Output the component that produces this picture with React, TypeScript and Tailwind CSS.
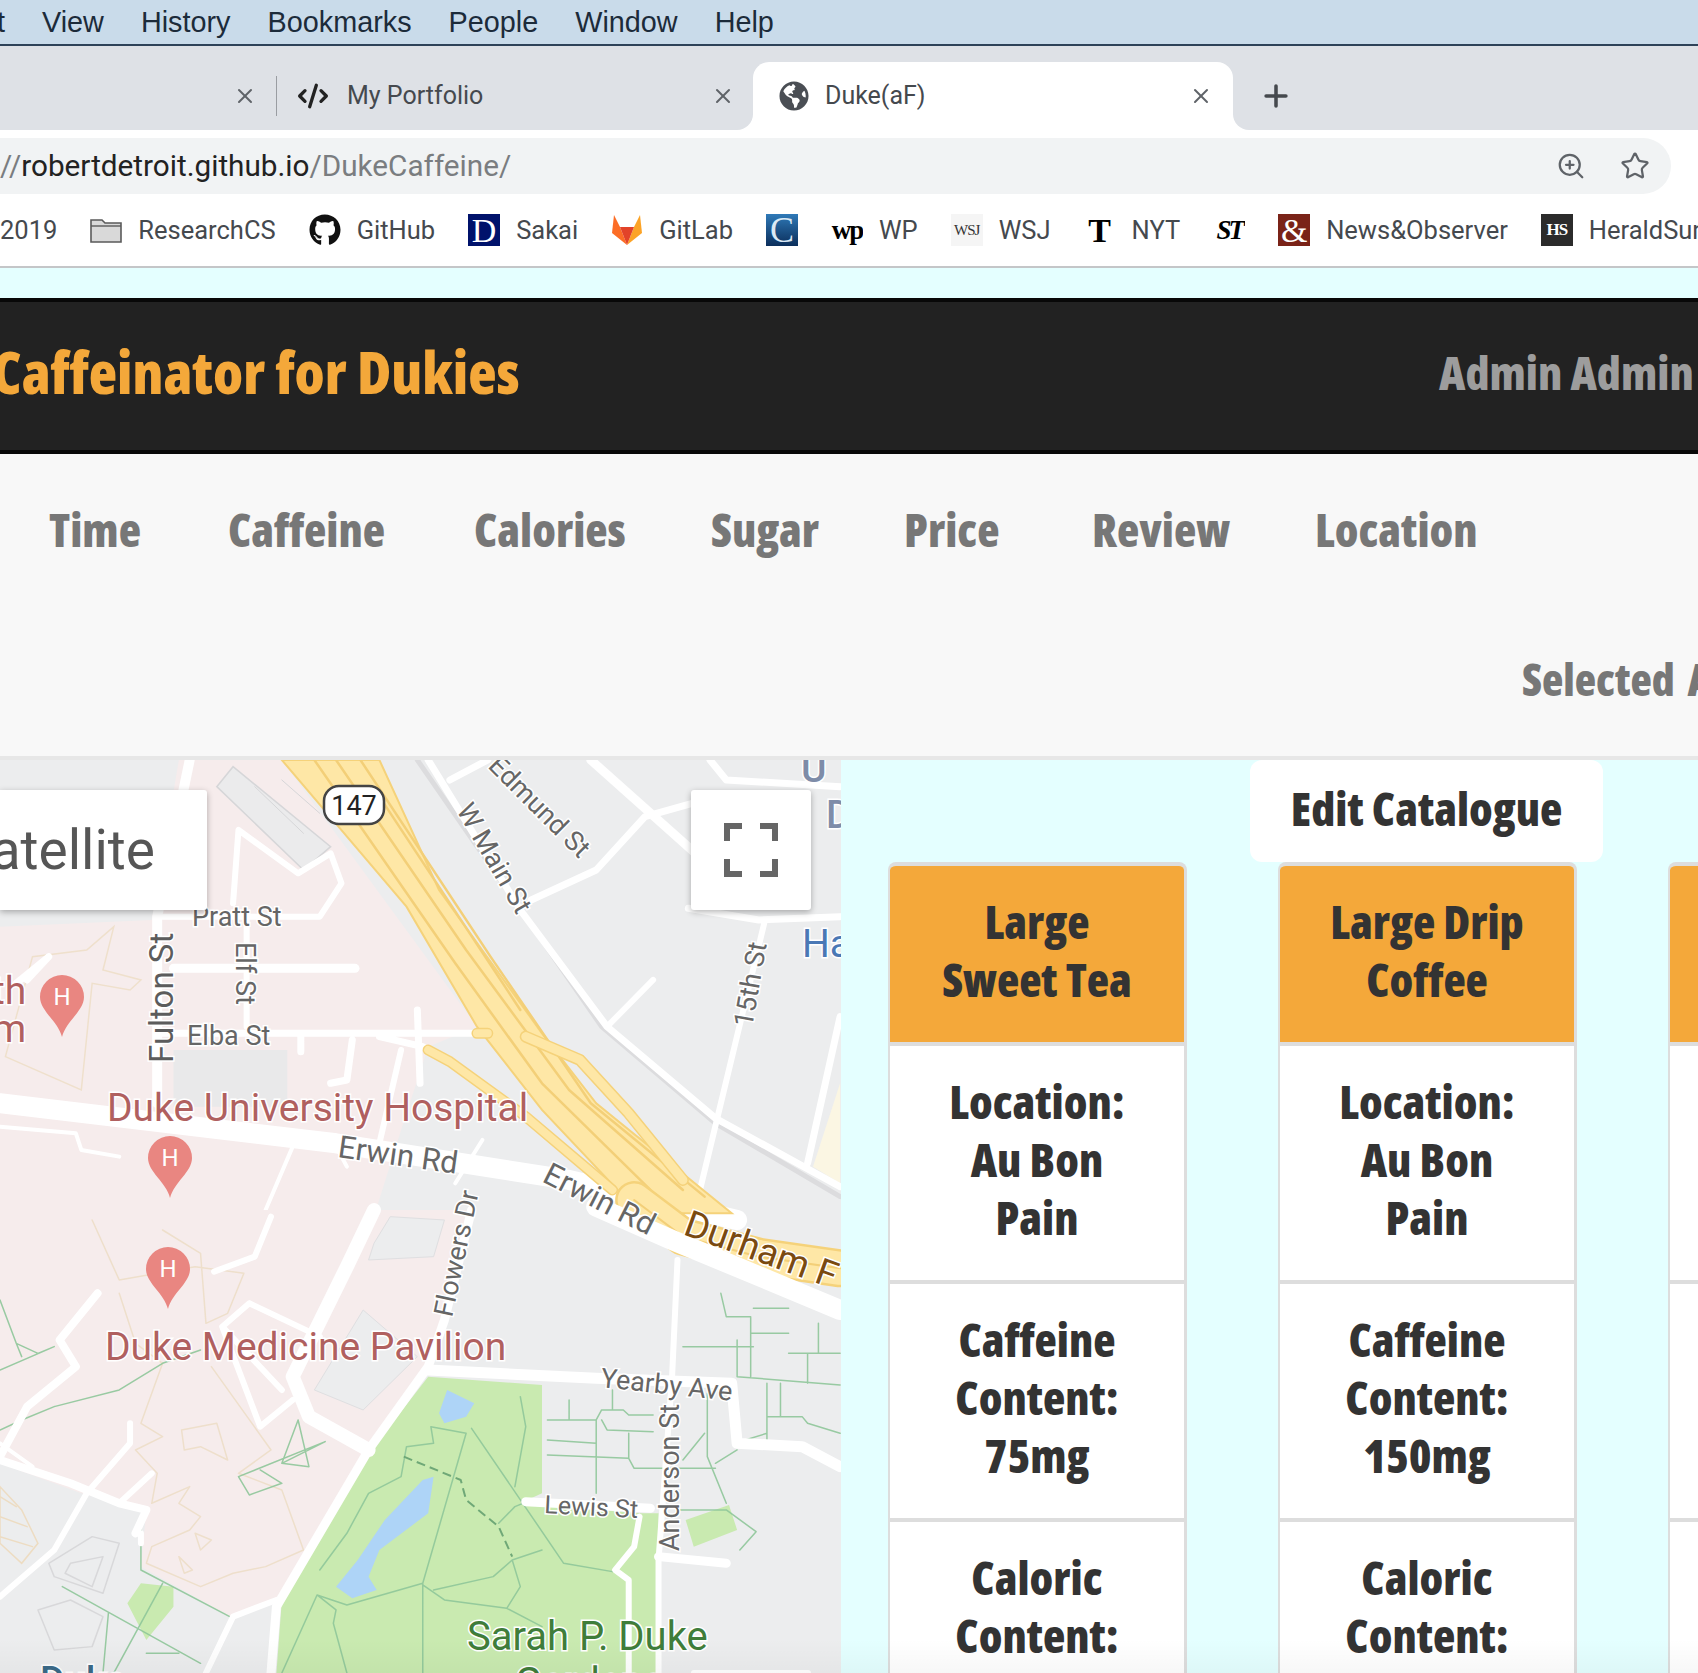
import { CodeXml, Plus, Star, X, ZoomIn } from 'lucide-react'
import { FaGithub, FaGlobeAmericas } from 'react-icons/fa'

const display = "font-['Open_Sans',sans-serif] font-extrabold font-stretch-condensed"
const chrome = "font-['Roboto',sans-serif]"

const navItems = [
  ['Time', 'w-[179px]'],
  ['Caffeine', 'w-[246px]'],
  ['Calories', 'w-[237px]'],
  ['Sugar', 'w-[193px]'],
  ['Price', 'w-[188px]'],
  ['Review', 'w-[223px]'],
  ['Location', 'w-[200px]'],
]

const drinks = [
  { name: ['Large', 'Sweet Tea'], caffeine: '75mg' },
  { name: ['Large Drip', 'Coffee'], caffeine: '150mg' },
  { name: ['Small', 'Iced Tea'], caffeine: '50mg' },
]

function Favicon({ className, children }: { className: string; children: React.ReactNode }) {
  return (
    <div className={`w-8 h-8 shrink-0 flex items-center justify-center overflow-hidden font-['Liberation_Serif',serif] ${className}`}>
      {children}
    </div>
  )
}

function Bookmark({ icon, label }: { icon: React.ReactNode; label?: string }) {
  return (
    <div className="flex items-center gap-4 shrink-0">
      {icon}
      {label && <span>{label}</span>}
    </div>
  )
}

function BrowserChrome() {
  return (
    <div className={chrome}>
      <div className="h-[46px] pt-[2px] bg-[#c9dbea] border-b-2 border-[#2d4258] flex items-center gap-[37px] -ml-[30px] text-[28.8px] text-[#1c2b3a] font-['Liberation_Sans',sans-serif] whitespace-nowrap">
        <span className="w-[35px] flex justify-end">Edit</span>
        <span>View</span>
        <span>History</span>
        <span>Bookmarks</span>
        <span>People</span>
        <span>Window</span>
        <span>Help</span>
      </div>
      <div className="h-[84px] flex bg-white text-[25px] text-[#45494e]">
        <div className="w-[753px] bg-[#dee1e6] rounded-br-[16px] flex items-center pt-4">
          <X className="ml-[233px] w-6 h-6 text-[#5f6368]" />
          <div className="w-px h-[40px] bg-[#9a9da2] ml-[19px]" />
          <CodeXml className="ml-[20px] w-[32px] h-[32px] text-[#222]" strokeWidth={2.5} />
          <span className="ml-[18px] w-[364px]">My Portfolio</span>
          <X className="w-6 h-6 text-[#5f6368]" />
        </div>
        <div className="w-[480px] bg-[#dee1e6] pt-4">
          <div className="h-full bg-white rounded-t-[16px] flex items-center">
            <FaGlobeAmericas className="ml-[26px] w-[30px] h-[30px] text-[#4a4e54]" />
            <span className="ml-[16px] w-[364px]">Duke(aF)</span>
            <X className="w-6 h-6 text-[#5f6368]" />
          </div>
        </div>
        <div className="flex-1 bg-[#dee1e6] rounded-bl-[16px] flex items-center pt-4">
          <Plus className="ml-[26px] w-[34px] h-[34px] text-[#45494e]" strokeWidth={2.5} />
        </div>
      </div>
      <div className="h-[64px] bg-white pt-2">
        <div className="w-[1671px] h-[56px] bg-[#f1f3f4] rounded-r-[28px] flex items-center text-[29.7px] whitespace-nowrap">
          <span className="text-[#7a7d80]">//</span>
          <span className="text-[#222]">robertdetroit.github.io</span>
          <span className="text-[#7a7d80]">/DukeCaffeine/</span>
          <ZoomIn className="ml-auto w-[30px] h-[30px] text-[#5f6368]" strokeWidth={1.8} />
          <Star className="ml-[34px] mr-[21px] w-[30px] h-[30px] text-[#5f6368]" strokeWidth={1.8} />
        </div>
      </div>
      <div className="h-[74px] bg-white border-b-2 border-[#c4c6c8] flex items-center gap-[33px] text-[25.5px] text-[#45494e] whitespace-nowrap">
        <span>2019</span>
        <Bookmark
          label="ResearchCS"
          icon={
            <svg viewBox="0 0 32 26" className="w-8 h-[26px]">
              <path d="M1 3h11l3 3h16v19H1z" fill="#d9d9d9" stroke="#5a5a5a" strokeWidth="1.6" />
              <path d="M1 9h30" stroke="#5a5a5a" strokeWidth="1.4" />
            </svg>
          }
        />
        <Bookmark label="GitHub" icon={<FaGithub className="w-8 h-8 text-[#111]" />} />
        <Bookmark
          label="Sakai"
          icon={<Favicon className="bg-[#00126b] text-white text-[34px]">D</Favicon>}
        />
        <Bookmark
          label="GitLab"
          icon={
            <svg viewBox="0 0 32 32" className="w-8 h-8">
              <path d="M16 31 1 19 3 1l6 12z" fill="#fc6d26" />
              <path d="M16 31 31 19 29 1l-6 12z" fill="#fca326" />
              <path d="M16 31 9 13h14z" fill="#e24329" />
            </svg>
          }
        />
        <Bookmark
          icon={<Favicon className="bg-gradient-to-b from-[#2f7ab8] to-[#0c2f5c] text-[#dbe9f5] text-[36px]">C</Favicon>}
        />
        <Bookmark
          label="WP"
          icon={<Favicon className="text-black text-[27px] font-bold tracking-[-2px]">wp</Favicon>}
        />
        <Bookmark
          label="WSJ"
          icon={<Favicon className="bg-[#f5f5f5] text-[#333] text-[15px] tracking-[-1px]">WSJ</Favicon>}
        />
        <Bookmark
          label="NYT"
          icon={<Favicon className="text-black text-[34px] font-bold">T</Favicon>}
        />
        <Bookmark
          icon={<Favicon className="text-black text-[27px] font-bold italic tracking-[-3px]">ST</Favicon>}
        />
        <Bookmark
          label="News&Observer"
          icon={<Favicon className="bg-[#7a2318] text-white text-[34px]">&amp;</Favicon>}
        />
        <Bookmark
          label="HeraldSun"
          icon={<Favicon className="bg-[#2b2b2b] text-white text-[17px] font-bold tracking-[-1px]">HS</Favicon>}
        />
      </div>
    </div>
  )
}

function MapPin({ x, y }: { x: number; y: number }) {
  return (
    <g transform={`translate(${x} ${y})`}>
      <path d="M0 60C-4 44-22 34-22 20a22 22 0 0 1 44 0C22 34 4 44 0 60z" fill="#e98681" />
      <text x="0" y="28" textAnchor="middle" fontSize="24" fill="#fff">H</text>
    </g>
  )
}

function Road({ d, w = 8, c = '#fff', dash }: { d: string; w?: number; c?: string; dash?: string }) {
  return <path d={d} fill="none" stroke={c} strokeWidth={w} strokeDasharray={dash} strokeLinejoin="round" strokeLinecap={dash ? 'butt' : 'round'} vectorEffect="non-scaling-stroke" />
}

function Label({ x, y, size = 27, color = '#666', rotate = 0, weight = 400, children }: {
  x: number
  y: number
  size?: number
  color?: string
  rotate?: number
  weight?: number
  children: string
}) {
  return (
    <text
      x={x}
      y={y}
      fontSize={size}
      fill={color}
      fontWeight={weight}
      stroke="#fff"
      strokeWidth="3"
      className="[paint-order:stroke]"
      transform={rotate ? `rotate(${rotate} ${x} ${y})` : undefined}
    >
      {children}
    </text>
  )
}

function MapDrawing() {
  return (
    <svg viewBox="0 0 841 913" className="w-[841px] h-[913px] block font-['Roboto',sans-serif]">
      <rect width="841" height="913" fill="#ecedee" />
      {/* upper half, traced from the top crop */}
      <g transform="translate(0 -10) scale(.542 .3333)">
        <path d="M0 530 280 510 330 30H520L880 830 790 890 740 1140 690 1400H0z" fill="#f6ecec" />
        <path d="M1500 1250 1550 1000V1300z" fill="#fbf6e3" />
        <path d="M430 50 610 290 560 360 400 110z" fill="#ebebec" stroke="#d6d6d8" strokeWidth="1.5" vectorEffect="non-scaling-stroke" />
        <Road d="M470 110 560 250M520 90 590 190" w={1} c="#d6d6d8" />
        <path d="M210 530 190 660 260 690 240 720 170 700 150 1020 10 920 60 620 160 600z" fill="none" stroke="#efe0cc" strokeWidth="1.5" vectorEffect="non-scaling-stroke" />
        <Road d="M30 700 90 620 50 690" w={7} />
        <path d="M320 900H530V1070H320z" fill="#e9e9ea" />
        <Road d="M350 30 290 500V1060" w={10} />
        <Road d="M300 500H590L630 400 610 310 550 370 440 240 430 460" w={6} />
        <Road d="M320 655H655" w={9} />
        <Road d="M455 500V830" w={6} />
        <Road d="M290 850H880M700 860 780 890M770 780 775 1000M650 870 640 990 610 1000M555 860V905" w={7} />
        <Road d="M0 1060 620 1180 1050 1290 1360 1410" w={20} />
        <Road d="M700 1180 740 900" w={6} />
        <Road d="M770 30 1110 830 1320 1120 1550 1340" w={5} c="#dcdcde" />
        <Road d="M790 30 960 480 1120 830 1320 1105 1550 1310" w={7} />
        <Road d="M830 90 900 30M980 450 1100 360 1190 200 1300 150" w={7} />
        <Road d="M1090 30 1290 320" w={9} />
        <Road d="M1410 520 1290 1330" w={6} />
        <Road d="M1120 830 1205 690" w={6} />
        <Road d="M1310 30 1340 90 1550 110M1270 475 1400 510 1550 500M1550 800 1490 1240" w={7} />
        <path d="M520 30H700L810 420 1000 850 1100 1060 1350 1390H1180L1000 1080 880 830 750 470z" fill="#fee7a6" stroke="#f5d27a" strokeWidth="2" vectorEffect="non-scaling-stroke" />
        <Road d="M580 30 840 640 1000 1000 1200 1320M620 30 860 600 1050 1020 1260 1320M665 30 905 620 1090 1060 1300 1340M700 140 960 780" w={2.5} c="#f3cf78" />
        <Road d="M970 860 1070 930 1160 1090 1260 1290" w={12} c="#f5d27a" />
        <Road d="M970 860 1070 930 1160 1090 1260 1290" w={9} c="#fee7a6" />
        <Road d="M790 900 830 935 970 1100 1130 1320M880 850H900" w={11} c="#f5d27a" />
        <Road d="M790 900 830 935 970 1100 1130 1320M880 850H900" w={8} c="#fee7a6" />
        <Road d="M0 1130 140 1150 150 1200 220 1220M490 1380 540 1190M620 1190 640 1250M840 1300 890 1170" w={4} />
      </g>
      {/* lower half, traced from the bottom crop */}
      <g transform="translate(0 450) scale(.542 .3333)">
        <path d="M0 0H870L790 470 680 720 520 1170 430 1225 260 1070 270 900 150 850 0 760z" fill="#f6ecec" />
        <path d="M680 150 690 100 720 20 820 30 800 140zM580 540 670 300 770 440 670 600z" fill="#ecedee" stroke="#dfdfe1" strokeWidth="1" vectorEffect="non-scaling-stroke" />
        <g fill="none" stroke="#eedfcb" strokeWidth="1.5">
          <Road d="M170 30 220 210 360 170 450 190 420 310 380 340 370 130 300 60" w={1.5} c="#eedfcb" />
          <Road d="M220 250 250 400 300 460 260 640 300 680 250 720 290 790 280 880 350 830 330 880 370 920 350 960 280 1010 270 1060 370 1130 430 1090 490 1070 560 1020 520 840 440 790 500 720 390 470" w={1.5} c="#eedfcb" />
          <Road d="M335 660 400 640 420 750 370 710 340 720zM360 970 390 990 370 1020zM330 1040 355 1080 340 1090z" w={1.5} c="#eedfcb" />
        </g>
        <path d="M0 830 40 900 70 1000 40 1060 0 1000z" fill="none" stroke="#eddcc2" strokeWidth="1.5" vectorEffect="non-scaling-stroke" />
        <Road d="M0 860 30 890M0 920 50 950M0 980 60 1010" w={1.5} c="#eddcc2" />
        <Road d="M90 1060 170 980 220 1000 190 1150 100 1100zM130 1060 190 1040 170 1130 120 1090zM70 1200 130 1170 190 1220 170 1310 100 1320z" w={1.5} c="#d8d8da" />
        <path d="M790 500 1000 525V850L960 880 1180 910H1215V1389H510L520 1170 680 730z" fill="#c9eab0" />
        <path d="M1265 930 1345 885 1360 960 1280 1010zM260 1120 320 1130 320 1190 270 1290 235 1180z" fill="#c9eab0" />
        <path d="M825 540 875 580 860 620 820 640 810 610zM800 800 790 910 700 1020 680 1100 695 1140 650 1165 620 1130 660 1050 710 930 780 810z" fill="#aed4f7" />
        <g opacity=".9">
          <Road d="M0 270 30 400 70 430 100 410M30 400 40 440M0 480 100 410M100 590 220 540 300 460 370 420M0 660 40 630 100 590" w={1.5} c="#8fc79a" />
          <Road d="M550 630 520 760 600 695 440 800 460 855 520 820 480 780M550 630 570 770 520 760" w={1.5} c="#8fc79a" />
          <Road d="M260 960V1080L430 1225M115 1130 370 1360M200 1210 190 1389M300 1120 210 1389M270 1330H330" w={1.5} c="#8fc79a" />
          <Road d="M590 1080 640 970 680 850 740 800 750 710 800 700 795 650 860 670 780 1120 640 1185 585 1155 520 1389M870 655 1040 1060 1130 1085M960 560 970 650 950 830M780 1120V1389M780 1125 820 1170 935 1195 960 1130 945 1050 1000 1020M800 1140 910 1100 945 1050M585 1155 620 1200 615 1240 640 1389M935 1195 1000 1250M920 940 950 890 980 870" w={1.5} c="#8fc79a" />
          <Road d="M1010 630H1100L1110 600H1150L1160 615 1205 615M1100 630 1100 850M1050 570 1050 630M1130 540V600M1110 630 1120 660 1205 665M1010 690 1100 700M1010 735 1160 745 1170 775H1320M1160 670V745M1250 900H1340L1395 965 1365 1020M1300 670 1260 750M1305 550 1305 740 1340 880" w={1.5} c="#8fc79a" />
          <Road d="M1330 250 1340 320H1385V500M1390 295H1455M1385 370H1455M1260 410H1390M1360 390V500L1550 525M1510 340V430M1455 430H1550M1490 430V520M1440 520V620M1415 520V700M1415 620H1480L1490 640 1550 670M1375 690 1415 670M1360 720 1320 760" w={1.5} c="#8fc79a" />
        </g>
        <Road d="M745 740 850 810 860 870 920 950 945 1040" w={2} c="#6fa877" dash="9 5" />
        <Road d="M690 0 640 170 540 500 570 620 680 720" w={14} />
        <Road d="M1170 -30 1260 80 1400 140 1550 175" w={38} c="#f5d27a" />
        <Road d="M1170 -30 1260 80 1400 140 1550 175" w={33} c="#fee7a6" />
        <Road d="M1170 -30 1260 80 1400 140 1550 175" w={2} c="#f3cf78" />
        <Road d="M1100 -10 1240 90 1550 300" w={20} />
        <Road d="M870 0 820 330 790 470 680 720 510 1190 500 1389" w={9} />
        <Road d="M790 480 1100 505 1350 520 1360 700 1480 710 1550 770" w={11} />
        <Road d="M1250 150 1240 500 1215 1050V1389" w={6} />
        <Road d="M970 875 1200 895M1215 1040 1340 1060" w={9} />
        <Road d="M1180 920 1170 1010 1135 1080 1160 1110V1389" w={6} />
        <Road d="M180 250 110 390 140 470 50 590 0 740M0 750 130 820 220 880 270 900 250 970" w={8} />
        <Road d="M160 850 100 1020 0 1160M240 640 240 700 160 850M280 790 220 880M510 1170 430 1220 380 1389M260 970V1000" w={6} />
        <Road d="M460 280 410 350 480 650 540 570M410 350 520 540M460 280 590 380M395 185 470 140 500 20" w={6} />
        <Road d="M0 700 60 770" w={4} />
      </g>

      <g transform="translate(354 45)">
        <rect x="-30" y="-19" width="60" height="38" rx="15" fill="#fff" stroke="#444" strokeWidth="2.5" />
        <text textAnchor="middle" y="10" fontSize="27" fill="#222">147</text>
      </g>

      <MapPin x={62} y={217} />
      <MapPin x={170} y={378} />
      <MapPin x={168} y={489} />

      <Label x={107} y={361} size={39} color="#b0605f">Duke University Hospital</Label>
      <Label x={105} y={600} size={39} color="#b0605f">Duke Medicine Pavilion</Label>
      <Label x={-8} y={244} size={39} color="#b0605f">th</Label>
      <Label x={-8} y={282} size={39} color="#b0605f">m</Label>
      <Label x={337} y={397} size={31} rotate={8}>Erwin Rd</Label>
      <Label x={541} y={421} size={31} rotate={27}>Erwin Rd</Label>
      <Label x={682} y={474} size={37} rotate={20} color="#7a4a10">Durham F</Label>
      <Label x={192} y={166} size={27}>Pratt St</Label>
      <Label x={173} y={303} size={33} rotate={-90} color="#5c5c5c">Fulton St</Label>
      <Label x={236} y={182} size={27} rotate={90}>Elf St</Label>
      <Label x={187} y={285} size={27}>Elba St</Label>
      <Label x={456} y={50} size={27} rotate={60}>W Main St</Label>
      <Label x={487} y={7} size={27} rotate={45}>Edmund St</Label>
      <Label x={752} y={268} size={27} rotate={-80}>15th St</Label>
      <Label x={802} y={197} size={39} color="#4a78b5">Ha</Label>
      <Label x={801} y={22} size={39} color="#7e8ca8" weight={500}>U</Label>
      <Label x={826} y={68} size={39} color="#7e8ca8" weight={500}>D</Label>
      <Label x={452} y={558} size={27} rotate={-78}>Flowers Dr</Label>
      <Label x={600} y={627} size={27} rotate={6}>Yearby Ave</Label>
      <Label x={679} y={791} size={27} rotate={-90}>Anderson St</Label>
      <Label x={544} y={753} size={25} rotate={3}>Lewis St</Label>
      <Label x={467} y={890} size={40} color="#3f7d3a">Sarah P. Duke</Label>
      <Label x={515} y={936} size={40} color="#3f7d3a">Gardens</Label>
      <Label x={40} y={934} size={38} color="#3a6a88" weight={500}>Duke</Label>
    </svg>
  )
}

function MapPanel() {
  return (
    <div className="relative w-[841px] shrink-0 overflow-hidden">
      <MapDrawing />
      <div className={`absolute left-0 top-[30px] w-[207px] h-[120px] bg-white rounded-r-[3px] shadow-[0_2px_6px_rgba(0,0,0,0.3)] flex items-center justify-end pr-[52px] text-[55px] text-[#565656] ${chrome}`}>
        Satellite
      </div>
      <div className="absolute left-[691px] top-[30px] w-[120px] h-[120px] bg-white rounded-[3px] shadow-[0_2px_6px_rgba(0,0,0,0.3)] flex items-center justify-center">
        <svg viewBox="0 0 54 54" className="w-[54px] h-[54px]">
          <path d="M3 18V3h15M36 3h15v15M51 36v15H36M18 51H3V36" fill="none" stroke="#666" strokeWidth="6" />
        </svg>
      </div>
      <div className="absolute left-[691px] top-[910px] w-[120px] h-[20px] bg-white rounded-[3px]" />
    </div>
  )
}

function Cell({ lines, className = 'bg-white' }: { lines: string[]; className?: string }) {
  return (
    <div className={`pt-[26px] pb-[34px] border-b-[4px] border-[#ddd] ${className}`}>
      {lines.map((line) => (
        <div key={line}>{line}</div>
      ))}
    </div>
  )
}

function DrinkCard({ name, caffeine }: { name: string[]; caffeine: string }) {
  return (
    <div className="w-[299px] shrink-0 border-l-[2px] border-r-[3px] border-t-[4px] border-[#ddd] rounded-t-[8px] overflow-hidden text-center">
      <Cell lines={name} className="bg-[#f4a83a]" />
      <Cell lines={['Location:', 'Au Bon', 'Pain']} />
      <Cell lines={['Caffeine', 'Content:', caffeine]} />
      <Cell lines={['Caloric', 'Content:', '5 cal']} />
    </div>
  )
}

function Catalogue() {
  return (
    <div className={`flex-1 bg-[#e4ffff] text-[#333] text-[46px] leading-[58px] ${display}`}>
      <div className="ml-[409px] w-[353px] h-[102px] pb-[6px] bg-white rounded-[12px] flex items-center justify-center whitespace-nowrap">
        Edit Catalogue
      </div>
      <div className="flex gap-[91px] pl-[47px]">
        {drinks.map((d) => (
          <DrinkCard key={d.name.join(' ')} name={d.name} caffeine={d.caffeine} />
        ))}
      </div>
    </div>
  )
}

export default function App() {
  return (
    <div className="relative w-[1698px] h-[1673px] overflow-hidden bg-[#e4ffff]">
      <BrowserChrome />
      <div className="h-[30px]" />
      <div className={`h-[156px] bg-[#222] border-y-4 border-[#080808] flex items-center pb-[8px] whitespace-nowrap ${display}`}>
        <div className="w-[1439px] -ml-[8px] text-[58.5px] text-[#f4a83a]">Caffeinator for Dukies</div>
        <div className="ml-[8px] text-[46px] text-[#9d9d9d]">Admin Admin</div>
      </div>
      <div className={`h-[306px] bg-[#f8f8f8] border-b-4 border-[#e7e7e7] text-[46px] text-[#777] whitespace-nowrap ${display}`}>
        <div className="flex pl-[49px] pt-[41px] h-[192px]">
          {navItems.map(([label, width]) => (
            <div key={label} className={width}>{label}</div>
          ))}
        </div>
        <div className="ml-[1522px] text-[44px] [word-spacing:5px]">Selected Attributes</div>
      </div>
      <div className="flex h-[913px]">
        <MapPanel />
        <Catalogue />
      </div>
      <div className="absolute left-0 right-0 bottom-0 h-[34px] bg-gradient-to-b from-transparent to-black/[0.03]" />
    </div>
  )
}
